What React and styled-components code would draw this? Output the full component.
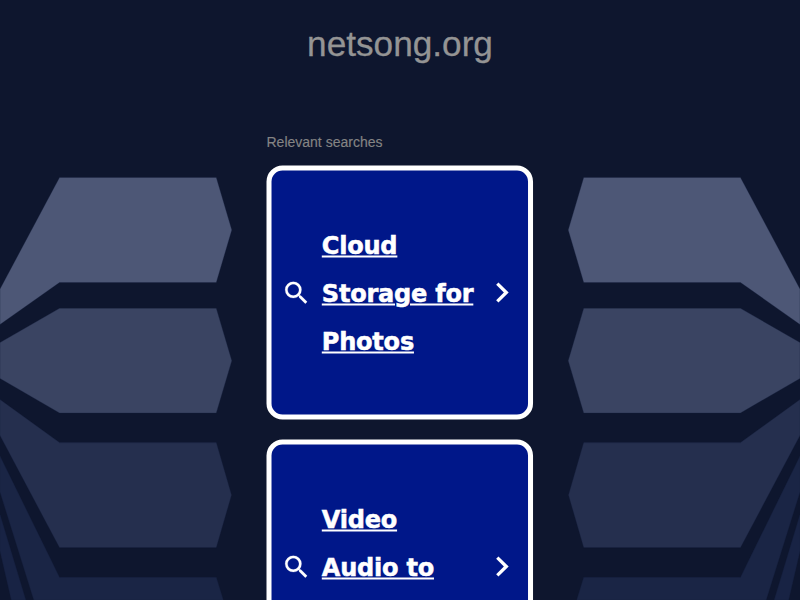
import React from "react";
import styled, { createGlobalStyle } from "styled-components";

const GlobalStyle = createGlobalStyle`
  html, body { margin: 0; height: 600px; overflow: hidden; background: #0e162e; }
`;

const Page = styled.div`
  position: relative;
  width: 800px;
  height: 600px;
  overflow: hidden;
  background: #0e162e;
  font-family: "Liberation Sans", Arial, sans-serif;
`;

const Backdrop = styled.svg`
  position: absolute;
  inset: 0;
`;

const Content = styled.main`
  position: relative;
  display: flex;
  flex-direction: column;
  align-items: center;
`;

const Title = styled.h1`
  margin: 24px 0 0;
  font-size: 35.2px;
  line-height: 40px;
  font-weight: 400;
  color: #949494;
  -webkit-text-stroke: 0.3px #949494;
`;

const Results = styled.section`
  width: 266px;
  margin-top: 70px;
  display: flex;
  flex-direction: column;
`;

const Label = styled.div`
  height: 16px;
  margin-bottom: 16px;
  font-size: 14px;
  line-height: 16px;
  color: #848484;
  transform: translateX(-0.5px);
  -webkit-text-stroke: 0.15px #848484;
`;

const Card = styled.a`
  box-sizing: border-box;
  display: flex;
  align-items: center;
  width: 266px;
  height: 254px;
  margin-bottom: 20px;
  padding-left: 12px;
  border: 5px solid #fff;
  border-radius: 16px;
  background: #001789;
  color: #fff;
  text-decoration: none;
  transform-origin: 0 0;
  transform: translate(-0.5px, -0.5px) scaleX(1.002);
`;

const CardText = styled.span`
  width: 155px;
  margin-left: 14.2px;
  padding-top: 1px;
  font: 700 24px/48px "DejaVu Sans", Verdana, sans-serif;
  letter-spacing: -0.24px;
  -webkit-text-stroke: 0.5px #fff;
  text-decoration: underline;
  text-decoration-thickness: 1.6px;
  text-underline-offset: 2px;
`;

const Icon = styled.svg`
  flex: none;
  fill: #fff;
`;

const Chevron = styled(Icon)`
  margin-left: 12.8px;
`;

const searches = ["Cloud Storage for Photos", "Video Audio to Text"];

const shapes = [
  ["#4d5776", "0,289 59.5,177.5 216.3,177.5 231.8,230 216.3,282.5 59.5,282.5 0,324.5"],
  ["#3a4462", "0,342.5 59.5,308.3 216.3,308.3 231.8,360.7 216.3,413 59.5,413 0,378.5"],
  ["#252f4e", "0,399.5 59.5,442.6 216.3,442.6 231.5,495 216.3,547.6 59.5,547.6 0,435.5"],
  ["#1a2545", "0,456 59.5,577.2 216.3,577.2 223.3,600 33.8,600 0,492"],
  ["#182344", "0,514.5 25.8,600 11.3,600 0,551"],
];

function Wing({ flipped }) {
  return (
    <g transform={flipped ? "matrix(-1 0 0 1 800 0)" : undefined}>
      {shapes.map(([fill, points]) => (
        <polygon key={fill} points={points} fill={fill} stroke="#17213f" strokeOpacity="0.3" strokeWidth="1" />
      ))}
    </g>
  );
}

function SearchCard({ text }) {
  return (
    <Card href="#">
      <Icon width="24" height="24" viewBox="0 0 24 24">
        <path
          transform="translate(-2.2 -2.6) scale(1.26)"
          stroke="#fff"
          strokeWidth="0.15"
          d="M15.5 14h-.79l-.28-.27A6.471 6.471 0 0 0 16 9.500 6.500 6.500 0 1 0 9.500 16c1.610 0 3.090-.59 4.230-1.570l.27.28v.79l5 4.990L20.490 19l-4.990-5zm-6 0C7.010 14 5 11.990 5 9.500S7.010 5 9.500 5 14 7.010 14 9.500 11.990 14 9.500 14z"
        />
      </Icon>
      <CardText>{text}</CardText>
      <Chevron width="24" height="24" viewBox="0 0 24 24">
        <path d="M6.200 19.700 8.500 22 18.700 12 8.500 2 6.200 4.300 13.900 12z" />
      </Chevron>
    </Card>
  );
}

export default function App() {
  return (
    <Page>
      <GlobalStyle />
      <Backdrop width="800" height="600" viewBox="0 0 800 600">
        <Wing />
        <Wing flipped />
      </Backdrop>
      <Content>
        <Title>netsong.org</Title>
        <Results>
          <Label>Relevant searches</Label>
          {searches.map((text) => (
            <SearchCard key={text} text={text} />
          ))}
        </Results>
      </Content>
    </Page>
  );
}
